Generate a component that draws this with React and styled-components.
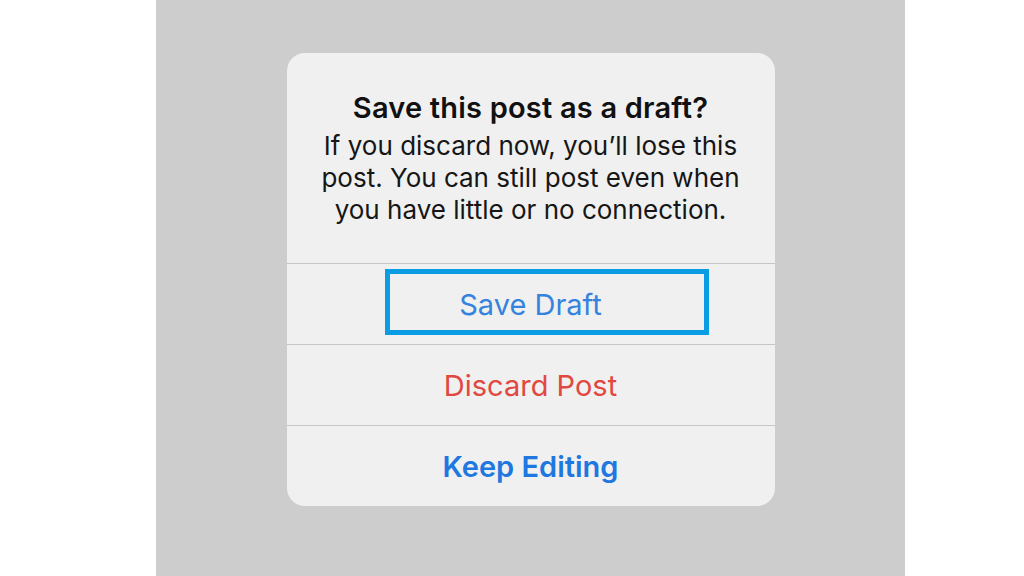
import React from "react";
import styled, { createGlobalStyle } from "styled-components";

const Global = createGlobalStyle`
  html, body { margin: 0; padding: 0; background: #ffffff; }
  body { font-family: Inter, "Noto Sans", "Liberation Sans", sans-serif; }
`;

const Page = styled.div`
  display: flex;
  width: 1024px;
  height: 576px;
  background: #ffffff;
  padding-left: 156px;
  box-sizing: border-box;
`;

const Backdrop = styled.div`
  width: 749px;
  height: 576px;
  background: #cdcdcd;
  display: flex;
  flex-direction: column;
  align-items: center;
  padding-top: 53px;
  box-sizing: border-box;
`;

const Dialog = styled.div`
  width: 488px;
  background: #f0f0f0;
  border-radius: 18px;
  display: flex;
  flex-direction: column;
  overflow: hidden;
`;

const Header = styled.div`
  padding: 38px 20px 37px;
  text-align: center;
  color: #111111;
  display: flex;
  flex-direction: column;
  gap: 5px;
`;

const Title = styled.div`
  font-size: 29px;
  line-height: 34px;
  font-weight: 600;
  letter-spacing: 0.2px;
`;

const Message = styled.div`
  font-size: 26px;
  line-height: 32px;
  font-weight: 400;
  color: #161616;
`;

const Action = styled.div`
  position: relative;
  height: 80px;
  border-top: 1px solid #c6c6c6;
  display: flex;
  align-items: center;
  justify-content: center;
  font-size: 29px;
  font-weight: ${(p) => (p.$bold ? 600 : 400)};
  color: ${(p) => p.$color};
`;

const Highlight = styled.div`
  position: absolute;
  left: 98px;
  top: 5px;
  width: 324px;
  height: 66px;
  border: 5px solid #0a9de3;
  box-sizing: border-box;
  pointer-events: none;
`;

export default function App() {
  return (
    <>
      <Global />
      <Page>
        <Backdrop>
          <Dialog>
            <Header>
              <Title>Save this post as a draft?</Title>
              <Message>
                If you discard now, you’ll lose this
                <br />
                post. You can still post even when
                <br />
                you have little or no connection.
              </Message>
            </Header>
            <Action $color="#3583de">
              Save Draft
              <Highlight />
            </Action>
            <Action $color="#e04841">Discard Post</Action>
            <Action $color="#1f78e0" $bold>
              Keep Editing
            </Action>
          </Dialog>
        </Backdrop>
      </Page>
    </>
  );
}
